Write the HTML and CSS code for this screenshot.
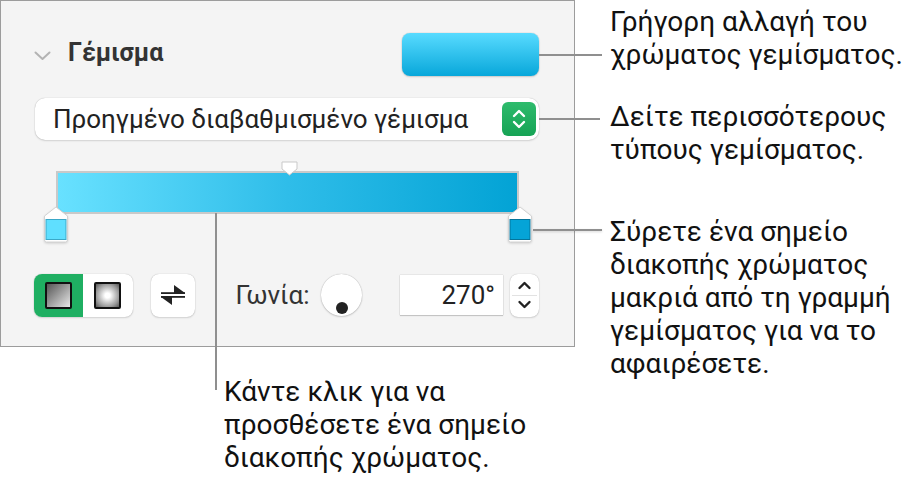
FILE: index.html
```html
<!DOCTYPE html>
<html lang="el">
<head>
<meta charset="UTF-8">
<meta name="viewport" content="width=device-width, initial-scale=1.0">
<title>Γέμισμα</title>
<link rel="stylesheet" href="styles.css">
</head>
<body>
<div class="figure">
  <div class="panel">
    <!-- Header row -->
    <div class="header-row">
      <svg class="chevron" width="17" height="10" viewBox="0 0 17 10"><path d="M1.5 1.5 L8.5 8 L15.5 1.5" fill="none" stroke="#b3b3b3" stroke-width="2" stroke-linecap="round" stroke-linejoin="round"/></svg>
      <div class="section-title">Γέμισμα</div>
      <div class="color-well leader"></div>
    </div>

    <!-- Fill type popup -->
    <div class="popup leader">
      <span class="popup-label">Προηγμένο διαβαθμισμένο γέμισμα</span>
      <span class="popup-arrows">
        <svg width="34" height="34" viewBox="0 0 34 34"><path d="M12 14 L17 9 L22 14 M12 20 L17 25 L22 20" fill="none" stroke="#fff" stroke-width="2.4" stroke-linecap="round" stroke-linejoin="round"/></svg>
      </span>
    </div>

    <!-- Gradient editor -->
    <div class="gradient-editor">
      <div class="gradient-bar"></div>
      <svg class="mid-marker" width="19" height="15" viewBox="0 0 19 15"><path d="M2 1 H17 V8 L9.5 14 L2 8 Z" fill="#fff" stroke="#c9c9c9" stroke-width="1"/></svg>
      <div class="stop stop-left">
        <svg width="26" height="37" viewBox="0 0 26 37"><path d="M1.5 10 L13 1 L24.5 10 V34 Q24.5 36 22.5 36 H3.5 Q1.5 36 1.5 34 Z" fill="#fff" stroke="#d2d2d2" stroke-width="1"/><rect x="3" y="13.5" width="20" height="20" fill="#5fdfff" stroke="#3aa8c8" stroke-width="1"/></svg>
      </div>
      <div class="stop stop-right leader">
        <svg width="26" height="37" viewBox="0 0 26 37"><path d="M1.5 10 L13 1 L24.5 10 V34 Q24.5 36 22.5 36 H3.5 Q1.5 36 1.5 34 Z" fill="#fff" stroke="#d2d2d2" stroke-width="1"/><rect x="3" y="13.5" width="20" height="20" fill="#05a4d7" stroke="#05759b" stroke-width="1"/></svg>
      </div>
      <div class="click-line"></div>
    </div>

    <!-- Controls row -->
    <div class="controls-row">
      <div class="segmented">
        <div class="segment active"><span class="swatch linear"></span></div>
        <div class="segment"><span class="swatch radial"></span></div>
      </div>
      <div class="swap-button">
        <svg width="24" height="22" viewBox="0 0 24 22"><path d="M0 9 H24 L13 1 V9 Z" fill="#222"/><rect x="0" y="8.2" width="24" height="1.8" fill="#222"/><path d="M24 13 H0 L11 21 V13 Z" fill="#222"/><rect x="0" y="12" width="24" height="1.8" fill="#222"/></svg>
      </div>
      <div class="angle-label">Γωνία:</div>
      <div class="knob"><span class="knob-dot"></span></div>
      <div class="number-field">270°</div>
      <div class="stepper">
        <svg width="29" height="43" viewBox="0 0 29 43"><path d="M9.5 14 L14.5 9 L19.5 14" fill="none" stroke="#222" stroke-width="2.4" stroke-linecap="round" stroke-linejoin="round"/><path d="M9.5 28 L14.5 33 L19.5 28" fill="none" stroke="#222" stroke-width="2.4" stroke-linecap="round" stroke-linejoin="round"/><line x1="2" y1="21.5" x2="27" y2="21.5" stroke="#e2e2e2" stroke-width="1"/></svg>
      </div>
    </div>
  </div>

  <div class="notes">
    <p class="note note-well">Γρήγορη αλλαγή του<br>χρώματος γεμίσματος.</p>
    <p class="note note-popup">Δείτε περισσότερους<br>τύπους γεμίσματος.</p>
    <p class="note note-stop">Σύρετε ένα σημείο<br>διακοπής χρώματος<br>μακριά από τη γραμμή<br>γεμίσματος για να το<br>αφαιρέσετε.</p>
  </div>
</div>

<p class="note note-click">Κάντε κλικ για να<br>προσθέσετε ένα σημείο<br>διακοπής χρώματος.</p>
</body>
</html>
```

FILE: styles.css
```css
body {
  margin: 0;
  background: #ffffff;
  font-family: Roboto, "Noto Sans", "DejaVu Sans", sans-serif;
  color: #111111;
}

.figure {
  display: flex;
  align-items: flex-start;
  height: 347px;
}

/* Inspector panel */
.panel {
  box-sizing: border-box;
  width: 575px;
  height: 347px;
  background: #f4f4f4;
  border: 1px solid #9c9c9c;
  padding: 32px 35px 0 33px;
  display: flex;
  flex-direction: column;
  flex-shrink: 0;
}

.header-row {
  display: flex;
  align-items: center;
  height: 43px;
}

.chevron {
  margin-top: 2px;
}

.section-title {
  margin-left: 17px;
  font-size: 25px;
  font-weight: 700;
  color: #333333;
  margin-top: -4px;
}

.color-well {
  margin-left: auto;
  width: 137px;
  height: 43px;
  border-radius: 8px;
  background: linear-gradient(#58dbff, #08a7da);
  box-shadow: 0 0 1px rgba(0, 0, 0, 0.35), 0 1px 2px rgba(0, 0, 0, 0.15);
}

/* leader lines running out of the panel to the notes */
.leader {
  position: relative;
}

.leader::after {
  content: "";
  position: absolute;
  top: 50%;
  left: 100%;
  height: 2px;
  margin-top: -1px;
  background: #8f8f8f;
}

.color-well::after {
  width: 63px;
}

.popup {
  margin-top: 22px;
  height: 42px;
  background: #ffffff;
  border-radius: 10px;
  box-shadow: 0 0 1px rgba(0, 0, 0, 0.3), 0 1px 2px rgba(0, 0, 0, 0.12);
  display: flex;
  align-items: center;
  padding: 0 3px 0 18px;
  margin-left: 1px;
}

.popup::after {
  width: 61px;
}

.popup-label {
  font-size: 26px;
  color: #222222;
}

.popup-arrows {
  margin-left: auto;
  width: 34px;
  height: 34px;
  border-radius: 6px;
  background: linear-gradient(#2ebb6c, #16a355);
  display: flex;
}

.gradient-editor {
  position: relative;
  margin-top: 21px;
  height: 81px;
}

.gradient-bar {
  box-sizing: border-box;
  margin: 10px 0 0 22px;
  width: 463px;
  height: 43px;
  border: 2px solid #c9c9c9;
  background: linear-gradient(90deg, #68e1ff, #2fbde9 50%, #03a3d5);
}

.mid-marker {
  position: absolute;
  left: 246px;
  top: 0;
}

.stop {
  position: absolute;
  top: 45px;
  width: 26px;
  height: 37px;
  filter: drop-shadow(0 1px 1px rgba(0, 0, 0, 0.15));
}

.stop-left {
  left: 9px;
}

.stop-right {
  left: 473px;
}

.stop-right::after {
  top: 24px;
  width: 69px;
}

.click-line {
  position: absolute;
  left: 181px;
  top: 52px;
  width: 2px;
  height: 177px;
  background: #8f8f8f;
}

.controls-row {
  margin-top: 31px;
  display: flex;
  align-items: center;
  height: 44px;
}

.segmented {
  display: flex;
  width: 99px;
  height: 43px;
  border-radius: 8px;
  overflow: hidden;
  background: #ffffff;
  box-shadow: 0 0 1px rgba(0, 0, 0, 0.3), 0 1px 2px rgba(0, 0, 0, 0.12);
}

.segment {
  flex: 1;
  display: flex;
  align-items: center;
  justify-content: center;
}

.segment.active {
  background: #1faf62;
}

.swatch {
  box-sizing: border-box;
  width: 27px;
  height: 27px;
  border: 2.5px solid #111111;
  border-radius: 2px;
}

.swatch.linear {
  background: linear-gradient(135deg, #555555, #e8e8e8);
}

.swatch.radial {
  background: radial-gradient(circle, #ffffff 15%, #9a9a9a 70%, #555555);
}

.swap-button {
  margin-left: 18px;
  width: 45px;
  height: 43px;
  border-radius: 8px;
  background: #ffffff;
  box-shadow: 0 0 1px rgba(0, 0, 0, 0.3), 0 1px 2px rgba(0, 0, 0, 0.12);
  display: flex;
  align-items: center;
  justify-content: center;
}

.angle-label {
  margin-left: 40px;
  font-size: 26px;
  color: #333333;
}

.knob {
  position: relative;
  margin-left: 11px;
  width: 42px;
  height: 42px;
  border-radius: 50%;
  background: #ffffff;
  box-shadow: 0 0 1px rgba(0, 0, 0, 0.35), 0 1px 2px rgba(0, 0, 0, 0.15);
}

.knob-dot {
  position: absolute;
  left: 15px;
  top: 28px;
  width: 12px;
  height: 12px;
  border-radius: 50%;
  background: #222222;
}

.number-field {
  box-sizing: border-box;
  margin-left: 38px;
  width: 103px;
  height: 40px;
  background: #ffffff;
  box-shadow: 0 0 1px rgba(0, 0, 0, 0.3), 0 1px 1px rgba(0, 0, 0, 0.15);
  font-size: 26px;
  color: #222222;
  text-align: right;
  line-height: 40px;
  padding-right: 8px;
}

.stepper {
  margin-left: 7px;
  width: 29px;
  height: 43px;
  border-radius: 8px;
  background: #ffffff;
  box-shadow: 0 0 1px rgba(0, 0, 0, 0.3), 0 1px 2px rgba(0, 0, 0, 0.12);
  display: flex;
}

/* Callout notes */
.notes {
  padding-left: 35px;
}

.note {
  margin: 0;
  font-size: 28px;
  line-height: 33px;
  color: #111111;
}

.note-well {
  margin-top: 5px;
}

.note-popup {
  margin-top: 29px;
}

.note-stop {
  margin-top: 49px;
}

.note-click {
  margin: 28px 0 0 224px;
}
```
